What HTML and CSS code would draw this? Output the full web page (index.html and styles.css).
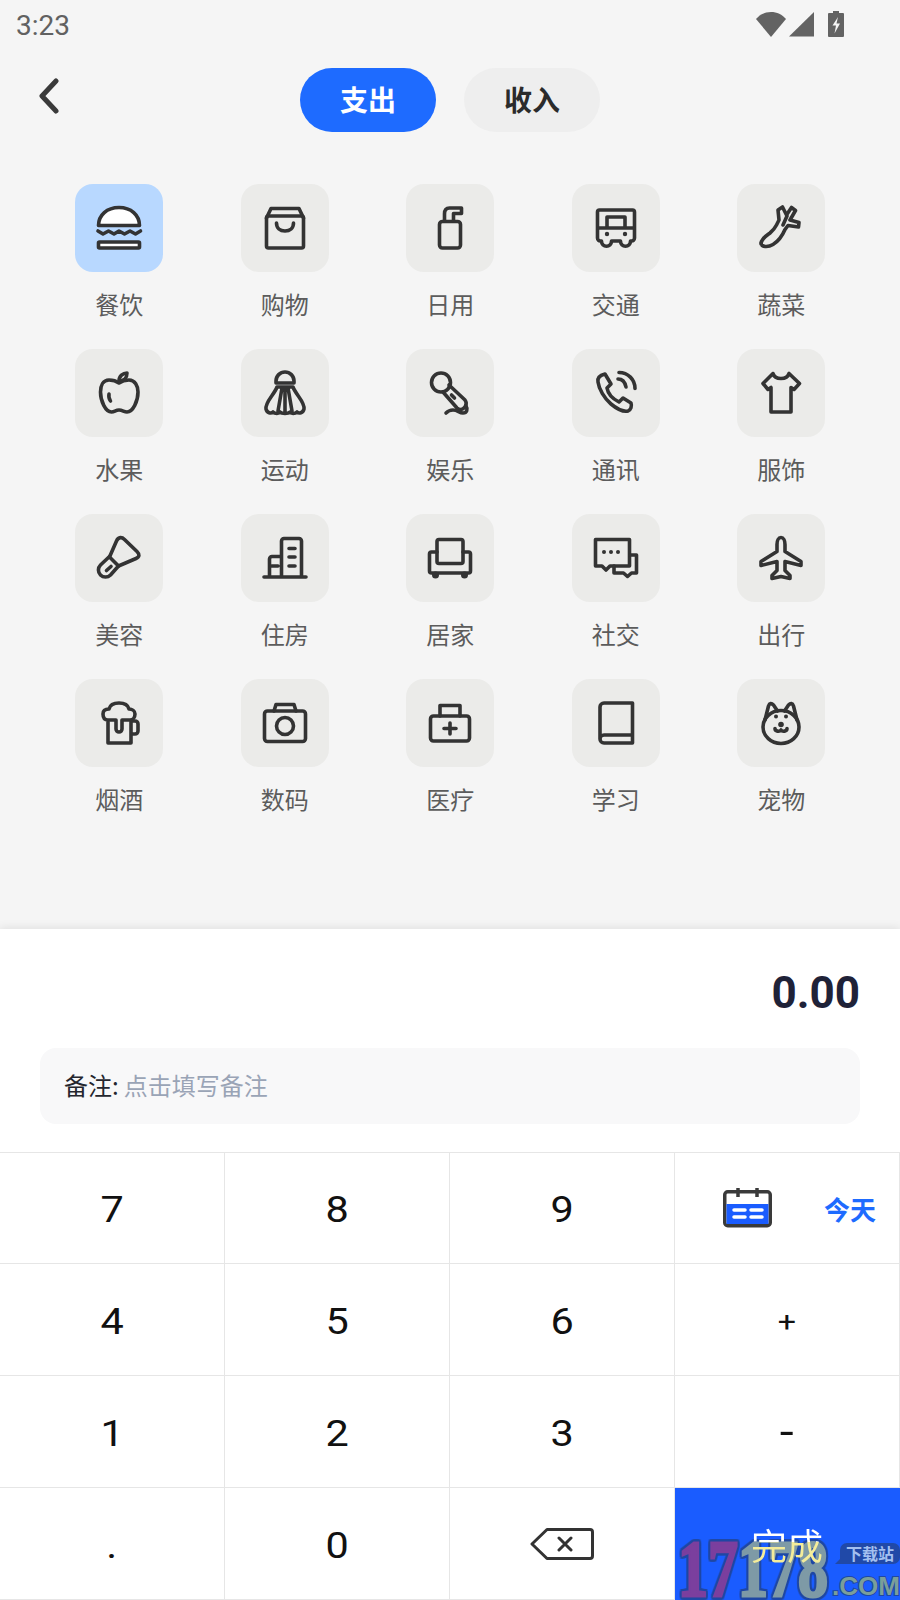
FILE: index.html
```html
<!DOCTYPE html>
<html lang="zh-CN">
<head>
<meta charset="utf-8">
<title>记账</title>
<link rel="stylesheet" href="styles.css">
</head>
<body>
<div class="app">
  <div class="status">
    <span class="time">3:23</span>
    <div class="status-icons">
      <svg width="30" height="26" viewBox="0 0 30 26"><path class="solid" d="M0 8C4 3.500 9 1 15 1s11 2.500 15 7L15 26z"/></svg>
      <svg width="25" height="26" viewBox="0 0 25 26"><path class="solid" d="M25 1v24.500H0z"/></svg>
      <svg width="16" height="26" viewBox="0 0 16 26"><path class="solid" d="M5 0h6v2h4a1 1 0 011 1v22a1 1 0 01-1 1H1a1 1 0 01-1-1V3a1 1 0 011-1h4z"/><path class="bolt" d="M10 6L4.500 14.500H8L6.500 22.500l5.500-10H8.500z"/></svg>
    </div>
  </div>
  <div class="top">
    <svg class="back" width="24" height="36" viewBox="0 0 24 36"><path d="M19 3L5 18l14 15"/></svg>
    <div class="tabs">
      <div class="pill on">支出</div>
      <div class="pill">收入</div>
    </div>
  </div>
  <div class="grid">
    <div class="cat"><div class="tile sel"><svg viewBox="0 0 88 88"><path class="w" d="M23.500 41.500C23.500 31 32 23.500 44 23.500S64.500 31 64.500 41.500z"/><path d="M23 47l5 3 5.500-3 5.500 3 5-3 5.500 3 5.500-3 5.500 3 5-3"/><rect class="w" x="23.500" y="58" width="41" height="6" rx="1"/></svg></div><span>餐饮</span></div>
    <div class="cat"><div class="tile"><svg viewBox="0 0 88 88"><rect x="25.500" y="32" width="37" height="32" rx="2"/><path d="M25.500 34L30 24.500h28L62.500 34"/><path d="M35.500 39c0 5 3.500 8 8.500 8s8.500-3 8.500-8"/></svg></div><span>购物</span></div>
    <div class="cat"><div class="tile"><svg viewBox="0 0 88 88"><rect x="33.500" y="37.500" width="21" height="26.500" rx="3"/><path d="M38.500 37v-7c0-4 2-6 5-6h12v5.500H47.500V37"/></svg></div><span>日用</span></div>
    <div class="cat"><div class="tile"><svg viewBox="0 0 88 88"><path d="M25.500 28a2 2 0 012-2h33a2 2 0 012 2v26a3 3 0 01-3 3h-1c0 7-10 7-10 0h-9c0 7-10 7-10 0h-1a3 3 0 01-3-3z"/><path d="M26 44h36M35 44V33h18v11"/><circle class="d" cx="35" cy="50" r="2.200"/><circle class="d" cx="53" cy="50" r="2.200"/></svg></div><span>交通</span></div>
    <div class="cat"><div class="tile"><svg viewBox="0 0 88 88"><path d="M24 60c0-5 5-8 9-11 3-2.500 5-5 6.500-8l2.500-5-1-10 4.500-3 4 8 5-7.500 4 3-5.500 9.500 9 2.500-.5 4.500-10.500-1.500-3 4c-3 7-7 12-12 15-5 3-12 3-12-2zM50 32l-4 9"/></svg></div><span>蔬菜</span></div>

    <div class="cat"><div class="tile"><svg viewBox="0 0 88 88"><path d="M44 34c-4-3-7-3-10-3-6 0-8.500 6-8.500 12 0 9 5 20 11 20 3 0 4-2 7.500-2s5 2 8 2c6 0 11-11 11-20 0-6-3-12-9-12-3 0-6 0-10 3z"/><path d="M44 32c0-5 4-8 8-8 0 5-3 8-8 8zM34 45c-.5 3 0 5 1.500 7"/></svg></div><span>水果</span></div>
    <div class="cat"><div class="tile"><svg viewBox="0 0 88 88"><path d="M35 34v-2a9 9 0 0118 0v2z"/><path d="M36 38h16c3 8 12 15 11 22-1 4-5 5-7 3-2 2-6 2-7 0-2 2-8 2-10 0-1 2-5 2-7 0-2 2-6 1-7-3-1-7 8-14 11-22zM41 39l-4 23M44 39v23M47 39l4 23"/></svg></div><span>运动</span></div>
    <div class="cat"><div class="tile"><svg viewBox="0 0 88 88"><circle cx="35" cy="33.500" r="9.500"/><path d="M37 43l14 16c2 2 5 2 7 0l1.500-2c1-2 1-4-.5-6L43 36M45.500 46l3 3"/><path d="M60 57c2 3 1 7-3 7s-5-3-10-3c-3 0-5 1-7 3"/></svg></div><span>娱乐</span></div>
    <div class="cat"><div class="tile"><svg viewBox="0 0 88 88"><path d="M26 33c-1-5 3-7 7-8l6 10-4 4c1 6 6 11 12 14l4-4 8 5c1 3 0 7-3 8-5 1-11-2-17-7-7-6-12-15-13-22z"/><path d="M46 30c4 0 7 3 8 8M47 23.500c9 0 16 7 16 16"/></svg></div><span>通讯</span></div>
    <div class="cat"><div class="tile"><svg viewBox="0 0 88 88"><path d="M36 24.500L26 34.500l5 6 3-2V63h20V38.500l3 2 5.500-6L52 24.500c-1 3.500-4.500 5-8 5s-7-1.500-8-5z"/></svg></div><span>服饰</span></div>

    <div class="cat"><div class="tile"><svg viewBox="0 0 88 88"><path d="M41.500 27c2-4.500 5.500-4 8-1.500l12.500 12c3 3 2.500 5.500-1 7L43.500 52 34.500 43z"/><path d="M34.500 42.500l-9 8.500a7 7 0 0010 10l8-9M31.500 56.500l4.500-4"/></svg></div><span>美容</span></div>
    <div class="cat"><div class="tile"><svg viewBox="0 0 88 88"><path d="M23 63h42M40.500 62V27a2.500 2.500 0 012.500-2.500h15a2.500 2.500 0 012.500 2.500v35M28.500 62V45a2.500 2.500 0 012.500-2.500h9.500M48 34.500h6M48 43h6M48 52h6M31 52h6"/></svg></div><span>住房</span></div>
    <div class="cat"><div class="tile"><svg viewBox="0 0 88 88"><rect x="31" y="25.500" width="26" height="24" rx="2"/><path d="M31 38h-5.500a2 2 0 00-2 2v17a2 2 0 002 2h37a2 2 0 002-2V40a2 2 0 00-2-2H57"/><circle class="d" cx="29.500" cy="61" r="3.500"/><circle class="d" cx="58.500" cy="61" r="3.500"/></svg></div><span>居家</span></div>
    <div class="cat"><div class="tile"><svg viewBox="0 0 88 88"><path d="M23.500 25.500h34V52H38l-4 4-4-4h-6.500z"/><path d="M58 41h6.500v18h-5l-4 3.500-4-3.500H42v-7"/><circle class="d" cx="32" cy="38" r="2"/><circle class="d" cx="39" cy="38" r="2"/><circle class="d" cx="46" cy="38" r="2"/></svg></div><span>社交</span></div>
    <div class="cat"><div class="tile"><svg viewBox="0 0 88 88"><path d="M44 23.500c2.500 0 4 3 4 7v7l16 10v4l-16-4v9l5 5v3l-9-2-9 2v-3l5-5v-9l-16 4v-4l16-10v-7c0-4 1.500-7 4-7z"/></svg></div><span>出行</span></div>

    <div class="cat"><div class="tile"><svg viewBox="0 0 88 88"><path d="M33 43v21h23V43M56 42h4a3 3 0 013 3v7a3 3 0 01-3 3h-4"/><path d="M33 41c-4 0-5-3-5-6 0-4 3-5 6-5 1-4 5-6 10-6s9 2 10 6c3 0 6 2 6 5 0 3-2 6-5 6h-8v9a3 3 0 01-6 0v-9z"/></svg></div><span>烟酒</span></div>
    <div class="cat"><div class="tile"><svg viewBox="0 0 88 88"><rect x="23.500" y="32" width="41" height="30.500" rx="3"/><path d="M33 32l2-6.500h18l2 6.500"/><circle cx="44" cy="47" r="8.500"/></svg></div><span>数码</span></div>
    <div class="cat"><div class="tile"><svg viewBox="0 0 88 88"><rect x="24.500" y="37" width="39" height="25" rx="3"/><path d="M34 37V26.500h20V37M38 49.500h12M44 44v11"/></svg></div><span>医疗</span></div>
    <div class="cat"><div class="tile"><svg viewBox="0 0 88 88"><path d="M28 60V28a4 4 0 014-4h28.500v40H32a4 4 0 01-4-4zM28 60a4 4 0 014-4h28"/></svg></div><span>学习</span></div>
    <div class="cat"><div class="tile"><svg viewBox="0 0 88 88"><path d="M28 41l3.500-14c1-3 3-3 5-1l4 6M60 41l-3.500-14c-1-3-3-3-5-1l-4 6"/><ellipse cx="44" cy="48" rx="18" ry="16.500"/><circle class="d" cx="39" cy="37.500" r="2"/><circle class="d" cx="49" cy="37.500" r="2"/><circle class="d" cx="44" cy="45.500" r="2.800"/><path d="M38 49.500c0 3 4.500 3.500 6 1.500 1.500 2 6 1.500 6-1.500"/></svg></div><span>宠物</span></div>
  </div>

  <div class="panel">
    <div class="amount">0.00</div>
    <div class="note"><span class="note-k">备注:</span> <span class="note-p">点击填写备注</span></div>
    <div class="keys">
      <div class="key"><span class="digit">7</span></div>
      <div class="key"><span class="digit">8</span></div>
      <div class="key"><span class="digit">9</span></div>
      <div class="key date">
        <svg width="49" height="40" viewBox="0 0 49 40"><rect x="1.750" y="3.750" width="45.500" height="34" rx="3" fill="#fff" stroke="#3a3a3a" stroke-width="3.500"/><rect x="3.500" y="16" width="42" height="20" fill="#1a5cff"/><path d="M15 0v9M34 0v9" stroke="#3a3a3a" stroke-width="3.500"/><path d="M11 22h11M28 22h11M11 29h11M28 29h11" stroke="#fff" stroke-width="3.500" stroke-linecap="round"/></svg>
        <span>今天</span>
      </div>
      <div class="key"><span class="digit">4</span></div>
      <div class="key"><span class="digit">5</span></div>
      <div class="key"><span class="digit">6</span></div>
      <div class="key plus"><span class="digit">+</span></div>
      <div class="key"><span class="digit">1</span></div>
      <div class="key"><span class="digit">2</span></div>
      <div class="key"><span class="digit">3</span></div>
      <div class="key minus"><span class="digit">-</span></div>
      <div class="key"><span class="digit">.</span></div>
      <div class="key"><span class="digit">0</span></div>
      <div class="key">
        <svg width="64" height="32" viewBox="0 0 64 32"><path class="bs" d="M17 1.500h43a2.500 2.500 0 012.500 2.500v24a2.500 2.500 0 01-2.500 2.500H17L2 16zM29 10l12 12M41 10L29 22"/></svg>
      </div>
      <div class="key done"><span class="done-t">完成</span></div>
    </div>
  </div>

  <div class="mark">
    <span class="mark-num"><b class="p">17</b><b class="g">178</b></span>
    <span class="mark-tag">下载站</span>
    <span class="mark-com">.COM</span>
  </div>
</div>
</body>
</html>
```
FILE: styles.css
```css
* { box-sizing: border-box; }
html, body { margin: 0; padding: 0; }
body { font-family: "Noto Sans CJK SC", "Noto Sans", sans-serif; background: #f5f5f5; }
.app { position: relative; width: 900px; height: 1600px; overflow: hidden; display: flex; flex-direction: column; background: #f5f5f5; }

.status { height: 50px; padding: 0 56px 0 16px; display: flex; align-items: center; justify-content: space-between; }
.time { font: 28px Roboto, sans-serif; color: #616161; }
.status-icons { display: flex; align-items: center; gap: 3px; margin-top: -3px; }
.status-icons svg:last-child { margin-left: 11px; }
.solid { fill: #636363; }
.bolt { fill: #f5f5f5; }

.top { position: relative; height: 84px; padding-top: 18px; display: flex; justify-content: center; }
.back { position: absolute; left: 37px; top: 28px; }
.back path { fill: none; stroke: #3a3a3a; stroke-width: 5; stroke-linecap: round; stroke-linejoin: round; }
.tabs { display: flex; gap: 28px; }
.pill { width: 136px; height: 64px; padding-bottom: 2px; border-radius: 32px; background: #eee; color: #2b2b2b; font-size: 28px; font-weight: 700; display: flex; align-items: center; justify-content: center; }
.pill.on { background: #1e6bff; color: #fff; }

.grid { margin-top: 50px; padding-left: 36.5px; width: 864px; display: grid; grid-template-columns: repeat(5, 165.5px); grid-auto-rows: 165px; }
.cat { display: flex; flex-direction: column; align-items: center; }
.tile { width: 88px; height: 88px; border-radius: 18px; background: #ebebe9; }
.tile.sel { background: #b8d8ff; }
.tile svg { display: block; width: 88px; height: 88px; fill: none; stroke: #333; stroke-width: 3.600; stroke-linejoin: round; stroke-linecap: round; }
.tile .w { fill: #fff; }
.tile .d { fill: #333; stroke: none; }
.cat span { margin-top: 15px; font-size: 24px; line-height: 34px; color: #5c5c5c; }

.panel { position: absolute; left: 0; right: 0; top: 929px; bottom: 0; background: #fff; box-shadow: 0 -2px 8px rgba(0,0,0,.08); display: flex; flex-direction: column; }
.amount { margin-top: 36px; margin-bottom: -2px; padding-right: 40px; text-align: right; font: 700 44px/56px Roboto, sans-serif; color: #1f2238; }
.note { margin: 29px 40px 0; height: 76px; padding: 0 24px 3px; border-radius: 16px; background: #f8f8f9; display: flex; align-items: center; gap: 5px; font-size: 24px; }
.note-k { color: #24262e; }
.note-p { color: #9aa4b6; }
.keys { margin-top: 28px; flex: 1; display: grid; grid-template-columns: repeat(4, 225px); grid-template-rows: 111px repeat(3, 112px); border-top: 1px solid #e6e6e6; }
.key { display: flex; align-items: center; justify-content: center; border-right: 1px solid #e6e6e6; border-bottom: 1px solid #e6e6e6; color: #111; }
.digit { display: block; font: 36px/42px Roboto, sans-serif; transform: translateY(2px) scaleX(1.15); }
.plus .digit { font-size: 28px; }
.minus .digit { font-size: 42px; transform: scaleX(1.2); }
.key.date { justify-content: flex-start; padding-left: 48px; gap: 52px; }
.key.date span { font: 700 26px "Noto Sans CJK SC", sans-serif; color: #1e6bff; }
.key.done { background: #1a5cff; border-color: #1a5cff; }
.done-t { position: relative; z-index: 2; font-size: 36px; line-height: 50px; color: transparent; background: linear-gradient(#fff 0 46%, #f4ec9a 46%); -webkit-background-clip: text; background-clip: text; }
.bs { fill: none; stroke: #333; stroke-width: 3; stroke-linejoin: round; stroke-linecap: round; }

.mark { position: absolute; left: 678px; top: 1540px; width: 222px; height: 60px; pointer-events: none; z-index: 1; }
.mark-num { position: absolute; left: 0; top: 0; font: 700 81px/58px "Liberation Serif", serif; white-space: nowrap; transform: scaleX(.74); transform-origin: left top; -webkit-text-stroke: 3px currentColor; filter: drop-shadow(2px 0 0 #1f47a3) drop-shadow(-2px 0 0 #1f47a3) drop-shadow(0 2px 0 #1f47a3) drop-shadow(0 -2px 0 #1f47a3); }
.mark-num b { font-weight: 700; }
.mark-num .p { color: #7b3f9e; }
.mark-num .g { color: #7e9aa6; }
.mark-tag { position: absolute; right: 0; top: 3px; width: 60px; height: 21px; border-radius: 7px 7px 7px 0; background: #2049a8; color: #a3c0f0; font-size: 16px; line-height: 21px; font-weight: 700; text-align: center; white-space: nowrap; }
.mark-tag::after { content: ""; position: absolute; left: -5px; bottom: 0; border-right: 6px solid #2049a8; border-top: 6px solid transparent; }
.mark-com { position: absolute; left: 154px; top: 33px; font: 700 26px/27px "Liberation Sans", sans-serif; white-space: nowrap; color: #7a9e9a; -webkit-text-stroke: 2px #1f47a3; paint-order: stroke fill; }
```
